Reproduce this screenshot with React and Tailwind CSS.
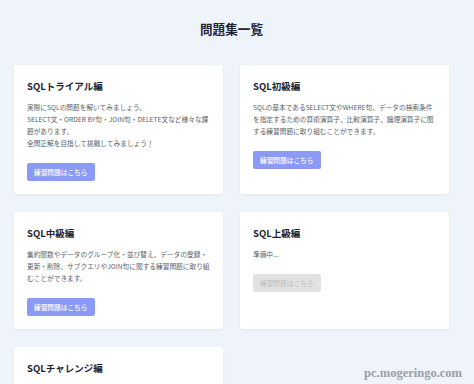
const courses = [
  {
    title: 'SQLトライアル編',
    lines: [
      '実際にSQLの問題を解いてみましょう。',
      'SELECT文・ORDER BY句・JOIN句・DELETE文など様々な課題があります。',
      '全問正解を目指して挑戦してみましょう！',
    ],
    ready: true,
  },
  {
    title: 'SQL初級編',
    lines: [
      'SQLの基本であるSELECT文やWHERE句、データの検索条件を指定するための算術演算子、比較演算子、論理演算子に関する練習問題に取り組むことができます。',
    ],
    ready: true,
  },
  {
    title: 'SQL中級編',
    lines: [
      '集約関数やデータのグループ化・並び替え、データの登録・更新・削除、サブクエリやJOIN句に関する練習問題に取り組むことができます。',
    ],
    ready: true,
  },
  {
    title: 'SQL上級編',
    lines: ['準備中...'],
    ready: false,
  },
  {
    title: 'SQLチャレンジ編',
    lines: [],
    ready: true,
  },
]

function CourseCard({ course }) {
  return (
    <div className="bg-white rounded-[3px] shadow-[0_1px_3px_rgba(30,40,90,0.06)] px-[13px] pt-[13px] pb-[13px]">
      <h2 className="text-[9.5px] leading-[16px] font-bold text-[#1e2433]">{course.title}</h2>
      {course.lines.length > 0 && (
        <>
          <div className="mt-[7px] text-[6.7px] leading-[12px] text-[#5a5f68]">
            {course.lines.map((l, i) => (
              <p key={i}>{l}</p>
            ))}
          </div>
          {course.ready ? (
            <button className="mt-[14px] h-[18px] px-[7px] rounded-[2px] bg-[#8b9bf5] text-white text-[6.7px] font-medium">
              練習問題はこちら
            </button>
          ) : (
            <button disabled className="mt-[14px] h-[18px] px-[7px] rounded-[2px] bg-[#e2e2e2] text-[#bcbcbc] text-[6.7px]">
              練習問題はこちら
            </button>
          )}
        </>
      )}
    </div>
  )
}

export default function App() {
  return (
    <div className="relative w-[474px] h-[384px] overflow-hidden bg-[#eff3fa] font-['Noto_Sans_CJK_JP','Noto_Sans',sans-serif]">
      <div className="w-[435px] ml-[14px]">
        <h1 className="pt-[20px] text-center text-[12.6px] leading-[18px] font-bold text-[#1e2433]">問題集一覧</h1>
        <div className="mt-[27px] grid grid-cols-2 gap-x-[17px] gap-y-[18px]">
          {courses.map((c) => (
            <CourseCard key={c.title} course={c} />
          ))}
        </div>
      </div>
      <div className="absolute right-[12px] top-[365px] font-['Liberation_Serif',serif] font-bold text-[12.5px] leading-[16px] text-[#9aa0a8]">
        pc.mogeringo.com
      </div>
    </div>
  )
}
